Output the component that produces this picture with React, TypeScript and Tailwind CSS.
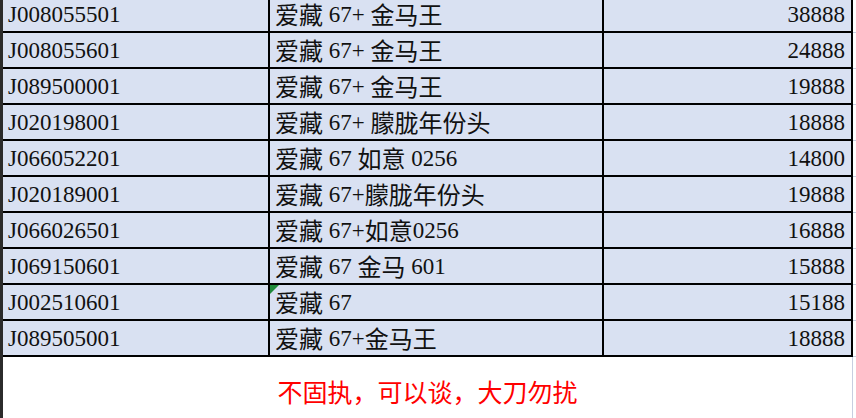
const rows = [
  { code: 'J008055501', name: '爱藏 67+ 金马王', price: '38888' },
  { code: 'J008055601', name: '爱藏 67+ 金马王', price: '24888' },
  { code: 'J089500001', name: '爱藏 67+ 金马王', price: '19888' },
  { code: 'J020198001', name: '爱藏 67+ 朦胧年份头', price: '18888' },
  { code: 'J066052201', name: '爱藏 67 如意 0256', price: '14800' },
  { code: 'J020189001', name: '爱藏 67+朦胧年份头', price: '19888' },
  { code: 'J066026501', name: '爱藏 67+如意0256', price: '16888' },
  { code: 'J069150601', name: '爱藏 67 金马 601', price: '15888' },
  { code: 'J002510601', name: '爱藏 67', price: '15188', flag: true },
  { code: 'J089505001', name: '爱藏 67+金马王', price: '18888' },
];

// split into CJK / latin runs so digits keep the serif face
function runs(text: string) {
  return text.match(/[\u4e00-\u9fff]+|[^\u4e00-\u9fff]+/g) ?? [];
}

function Row({ code, name, price, flag }: { code: string; name: string; price: string; flag?: boolean }) {
  return (
    <div className="flex h-[36px]">
      <div className="flex w-[267px] items-center border-r-2 border-b-2 border-black bg-[#d9e1f2] pl-[5px] text-[23px] leading-none text-[#111]">
        {code}
      </div>
      <div className="relative flex w-[334px] items-center whitespace-pre border-r-2 border-b-2 border-black bg-[#d9e1f2] pl-[5px] text-[23px] leading-none text-[#111]">
        {flag && (
          <svg className="absolute left-0 top-0" width="9" height="9" viewBox="0 0 9 9">
            <polygon points="0,0 9,0 0,9" fill="#1f8a3b" />
          </svg>
        )}
        {runs(name).map((s, i) =>
          /[\u4e00-\u9fff]/.test(s) ? (
            <span key={i} className="font-['Noto_Sans_CJK_SC',sans-serif] text-[24px]">
              {s}
            </span>
          ) : (
            <span key={i} className="font-['Liberation_Serif',serif]">
              {s}
            </span>
          ),
        )}
      </div>
      <div className="flex w-[249px] items-center justify-end border-r-2 border-b-2 border-black bg-[#d9e1f2] pr-[6px] text-[23px] leading-none text-[#111]">
        {price}
      </div>
      <div className="flex-1 border-b border-[#c7cee0]" />
    </div>
  );
}

export default function App() {
  return (
    <div className="flex h-[418px] w-[856px] overflow-hidden bg-white font-['Liberation_Serif','Noto_Sans_CJK_SC',serif]">
      <div className="w-[3px] bg-[#2b2b2b]" />
      <div className="flex flex-1 flex-col">
        <div className="-mt-[3px]">
          {rows.map((r, i) => (
            <Row key={i} {...r} />
          ))}
        </div>
        <div className="flex flex-1">
          <div className="flex w-[849px] items-center justify-center pt-[9px] font-['Noto_Sans_CJK_SC',sans-serif] text-[25px] text-[#ff0000]">
            不固执，可以谈，大刀勿扰
          </div>
          <div className="flex-1 border-l border-[#c7cee0]" />
        </div>
      </div>
    </div>
  );
}
